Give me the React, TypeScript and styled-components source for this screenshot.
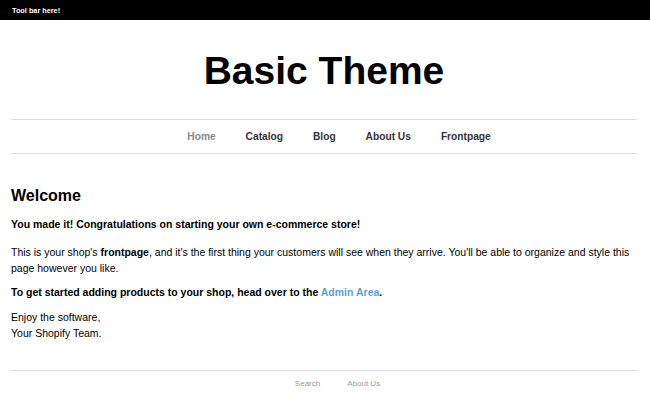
import React from "react";
import styled, { createGlobalStyle } from "styled-components";

const GlobalStyle = createGlobalStyle`
  html, body {
    margin: 0;
    padding: 0;
    background: #ffffff;
    font-family: "Liberation Sans", Arial, Helvetica, sans-serif;
    color: #000000;
  }
`;

const ToolBar = styled.div`
  background: #000000;
  color: #ffffff;
  height: 20px;
  display: flex;
  align-items: center;
  padding: 0 12px;
  font-size: 7.3px;
  font-weight: bold;
`;

const Page = styled.div`
  padding: 0 13px 0 11px;
`;

const Header = styled.header`
  display: flex;
  justify-content: center;
  padding: 26px 0 23px;
  border-bottom: 1px solid #dddddd;
`;

const Title = styled.h1`
  margin: 0;
  font-size: 39px;
  line-height: 50px;
  font-weight: bold;
`;

const Nav = styled.nav`
  display: flex;
  justify-content: center;
  height: 33px;
  align-items: center;
  border-bottom: 1px solid #dddddd;
`;

const NavLink = styled.a<{ $active?: boolean }>`
  margin-left: 30px;
  font-size: 10.2px;
  font-weight: bold;
  color: ${(p) => (p.$active ? "#888888" : "#333333")};
  text-decoration: none;
`;

const Main = styled.main`
  padding: 32px 0 20px;
  border-bottom: 1px solid #dddddd;
`;

const Heading = styled.h2`
  margin: 0 0 10px;
  font-size: 16px;
  line-height: 20px;
  font-weight: bold;
`;

const Para = styled.p<{ $bold?: boolean; $gap?: number }>`
  margin: 0 0 ${(p) => p.$gap ?? 9}px;
  font-size: 10.5px;
  line-height: 16px;
  font-weight: ${(p) => (p.$bold ? "bold" : "normal")};
`;

const Strong = styled.strong`
  font-weight: bold;
`;

const AdminLink = styled.a`
  color: #5b9fd8;
  text-decoration: none;
`;

const Footer = styled.footer`
  display: flex;
  justify-content: center;
  padding: 7px 0;
`;

const FooterLink = styled.a`
  margin-left: 27px;
  font-size: 8px;
  line-height: 11px;
  color: #999999;
  text-decoration: none;
`;

const navItems = ["Home", "Catalog", "Blog", "About Us", "Frontpage"];

export default function App() {
  return (
    <>
      <GlobalStyle />
      <ToolBar>Tool bar here!</ToolBar>
      <Page>
        <Header>
          <Title>Basic Theme</Title>
        </Header>
        <Nav>
          {navItems.map((item, i) => (
            <NavLink key={item} href="#" $active={i === 0}>
              {item}
            </NavLink>
          ))}
        </Nav>
        <Main>
          <Heading>Welcome</Heading>
          <Para $bold $gap={12}>
            You made it! Congratulations on starting your own e-commerce store!
          </Para>
          <Para $gap={8}>
            This is your shop's <Strong>frontpage</Strong>, and it's the first
            thing your customers will see when they arrive. You'll be able to
            organize and style this page however you like.
          </Para>
          <Para $bold>
            To get started adding products to your shop, head over to the{" "}
            <AdminLink href="#">Admin Area</AdminLink>.
          </Para>
          <Para>
            Enjoy the software,
            <br />
            Your Shopify Team.
          </Para>
        </Main>
        <Footer>
          <FooterLink href="#">Search</FooterLink>
          <FooterLink href="#">About Us</FooterLink>
        </Footer>
      </Page>
    </>
  );
}
